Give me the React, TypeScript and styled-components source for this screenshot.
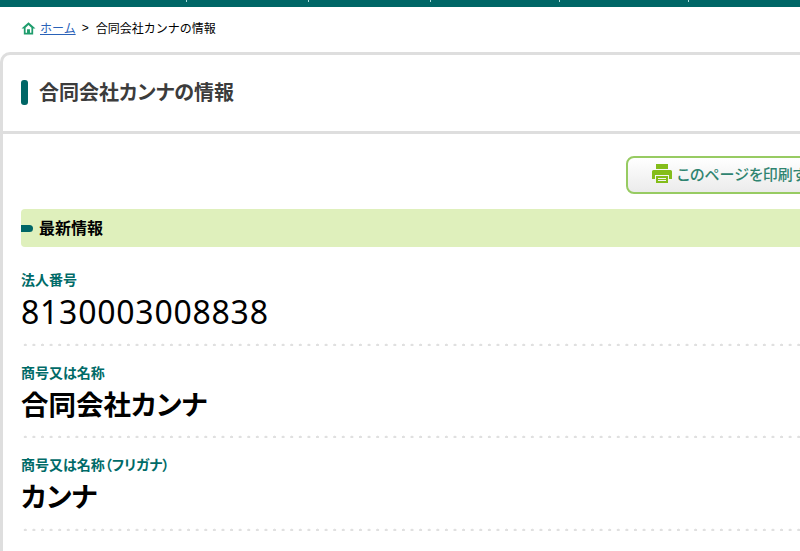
import styled, { createGlobalStyle } from 'styled-components'

const font = `"Liberation Sans", "Noto Sans CJK JP", sans-serif`

const GlobalStyle = createGlobalStyle`
    html, body {
        margin: 0;
        padding: 0;
        background: #fff;
        overflow: hidden;
    }
    body {
        width: 800px;
        height: 551px;
        font-family: ${font};
        font-feature-settings: "palt";
    }
`

const Page = styled.div`
    width: 800px;
    height: 551px;
    overflow: hidden;
`
const TopBar = styled.div`
    height: 7px;
    background: #006666;
    display: flex;
    align-items: flex-start;
`
const Tick = styled.span<{ $offset: number }>`
    width: 1px;
    height: 2px;
    background: #a9dcdc;
    margin-left: ${({ $offset }) => $offset}px;
`
const Breadcrumb = styled.nav`
    height: 45px;
    display: flex;
    align-items: center;
    padding: 0 0 4px 21px;
    box-sizing: border-box;
    font-size: 12px;
    font-feature-settings: normal;
    color: #000;
`
const HomeLink = styled.a`
    color: #2a62b8;
    text-decoration: underline;
    margin-left: 4px;
`
const Sep = styled.span`
    margin: 0 7px 0 6px;
`
const Panel = styled.section`
    width: 900px;
    box-sizing: border-box;
    border: 3px solid #dedede;
    border-radius: 10px 0 0 0;
    border-right: 0;
    border-bottom: 0;
`
const PanelHead = styled.header`
    height: 76px;
    box-sizing: content-box;
    display: flex;
    align-items: center;
    padding-left: 18px;
    border-bottom: 3px solid #dedede;
`
const HeadMark = styled.span`
    width: 7px;
    height: 25px;
    border-radius: 3px;
    background: #006666;
    margin: 0 11px 2px 0;
`
const Title = styled.h1`
    margin: 0 0 4px;
    font-size: 20px;
    font-weight: 700;
    color: #3c3c3c;
`
const PanelBody = styled.div`
    padding: 22px 0 0 18px;
`
const Tools = styled.div`
    display: flex;
    padding-left: 605px;
`
const PrintBtn = styled.button`
    width: 220px;
    height: 38px;
    flex: none;
    box-sizing: border-box;
    border: 2px solid #97cb62;
    border-radius: 8px;
    background: linear-gradient(#ffffff, #ebebeb);
    display: flex;
    align-items: center;
    padding: 0 0 3px 24px;
    font-family: ${font};
    font-feature-settings: "palt";
    font-size: 15px;
    font-weight: 500;
    color: #2f8470;
    white-space: nowrap;
`
const PrintIcon = styled.svg`
    width: 20px;
    height: 19px;
    margin-right: 5px;
    flex: none;
`
const SectionBar = styled.div`
    margin-top: 15px;
    height: 38px;
    background: #dff0bc;
    border-radius: 4px 0 0 4px;
    display: flex;
    align-items: center;
`
const SectionMark = styled.span`
    width: 12px;
    height: 7px;
    background: #006666;
    border-radius: 0 4px 4px 0;
    margin-right: 6px;
`
const SectionTitle = styled.h2`
    margin: 0 0 2px;
    font-size: 16px;
    font-weight: 700;
    color: #000;
`
const ItemList = styled.div`
    padding-top: 6px;
`
const Item = styled.div`
    height: 92.5px;
    box-sizing: border-box;
    padding-top: 19px;
    background-image: radial-gradient(circle, #e0e0e0 1.3px, transparent 1.6px);
    background-size: 8.6px 4px;
    background-repeat: repeat-x;
    background-position: 0 calc(100% + 1px);
`
const Label = styled.div`
    font-size: 14px;
    font-weight: 700;
    line-height: 16px;
    color: #006b68;
`
const Value = styled.div<{ $bold?: boolean }>`
    margin-top: ${({ $bold }) => ($bold ? '4px' : '3px')};
    font-family: ${({ $bold }) => ($bold ? font : `"Noto Sans", "Noto Sans CJK JP", sans-serif`)};
    font-size: ${({ $bold }) => ($bold ? '27.5px' : '32px')};
    font-weight: ${({ $bold }) => ($bold ? 700 : 400)};
    letter-spacing: ${({ $bold }) => ($bold ? '0' : '0.75px')};
    line-height: 42px;
    color: #000;
`

const ticks = [186, 121, 121, 128, 128]

const items = [
    { label: '法人番号', value: '8130003008838', bold: false },
    { label: '商号又は名称', value: '合同会社カンナ', bold: true },
    { label: '商号又は名称（フリガナ）', value: 'カンナ', bold: true },
    { label: '本店又は主たる事務所の所在地', value: '', bold: false },
]

function App() {
    return (
        <Page>
            <GlobalStyle />
            <TopBar>
                {ticks.map((offset, n) => (
                    <Tick key={n} $offset={offset} />
                ))}
            </TopBar>
            <Breadcrumb>
                <svg width="15" height="14" viewBox="0 0 24 24">
                    <path d="M12 2 0 13h4v10h16V13h4z" fill="#1f9d6d" />
                    <path d="M12 7 7 11.500V20h2.500v-6h5v6H17v-8.500z" fill="#fff" />
                </svg>
                <HomeLink href="#">ホーム</HomeLink>
                <Sep>&gt;</Sep>
                <span>合同会社カンナの情報</span>
            </Breadcrumb>
            <Panel>
                <PanelHead>
                    <HeadMark />
                    <Title>合同会社カンナの情報</Title>
                </PanelHead>
                <PanelBody>
                    <Tools>
                        <PrintBtn>
                            <PrintIcon viewBox="0 0 20 19">
                                <path
                                    d="M4 0h12v5H4zM1.500 6h17A1.500 1.500 0 0 1 20 7.500V15h-3v-4H3v4H0V7.500A1.500 1.500 0 0 1 1.500 6zM4 12h12v7H4zM6 14v1h8v-1zM6 16v1h8v-1z"
                                    fill="#84bd1a"
                                    fillRule="evenodd"
                                />
                            </PrintIcon>
                            このページを印刷する
                        </PrintBtn>
                    </Tools>
                    <SectionBar>
                        <SectionMark />
                        <SectionTitle>最新情報</SectionTitle>
                    </SectionBar>
                    <ItemList>
                        {items.map((it) => (
                            <Item key={it.label}>
                                <Label>{it.label}</Label>
                                <Value $bold={it.bold}>{it.value}</Value>
                            </Item>
                        ))}
                    </ItemList>
                </PanelBody>
            </Panel>
        </Page>
    )
}

export default App
